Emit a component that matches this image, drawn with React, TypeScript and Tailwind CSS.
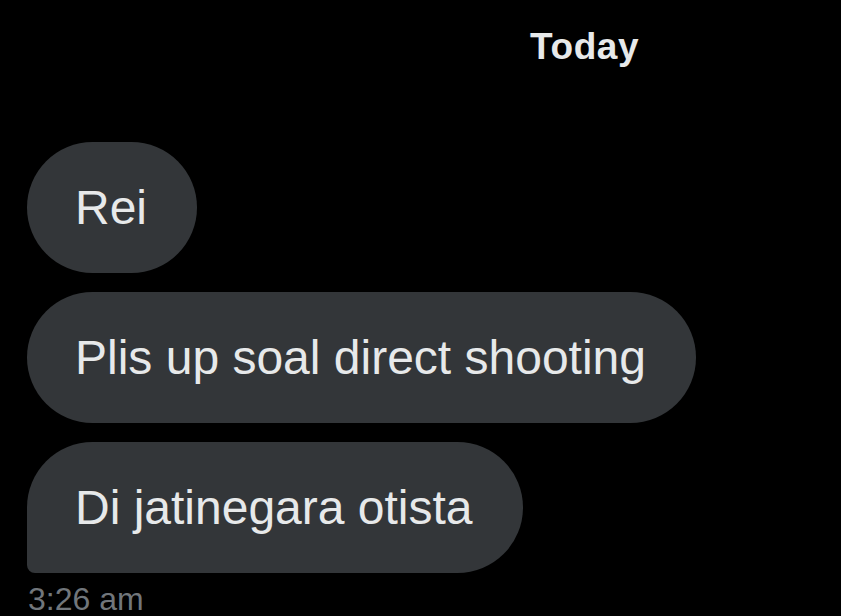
const messages = ['Rei', 'Plis up soal direct shooting', 'Di jatinegara otista']

export default function App() {
  return (
    <div className="h-[616px] w-[841px] overflow-hidden bg-black font-['Liberation_Sans',sans-serif]">
      {/* Day separator */}
      <div className="flex h-[94px] items-center pl-[530px] text-[37px] font-bold tracking-[0.6px] text-[#e7e9ea]">
        Today
      </div>

      {/* Messages */}
      <div className="flex flex-col items-start gap-[19px] pl-[27px] pt-[48px]">
        {messages.map((m, i) => (
          <div
            key={m}
            className={`flex h-[131px] items-center rounded-[66px] bg-[#333639] pl-[48px] pr-[50px] text-[48px] text-[#e7e9ea] ${
              i === messages.length - 1 ? 'rounded-bl-[8px]' : ''
            }`}
          >
            {m}
          </div>
        ))}
      </div>

      <div className="pl-[28px] pt-[10px] text-[32px] leading-none text-[#71767b]">3:26 am</div>
    </div>
  )
}
